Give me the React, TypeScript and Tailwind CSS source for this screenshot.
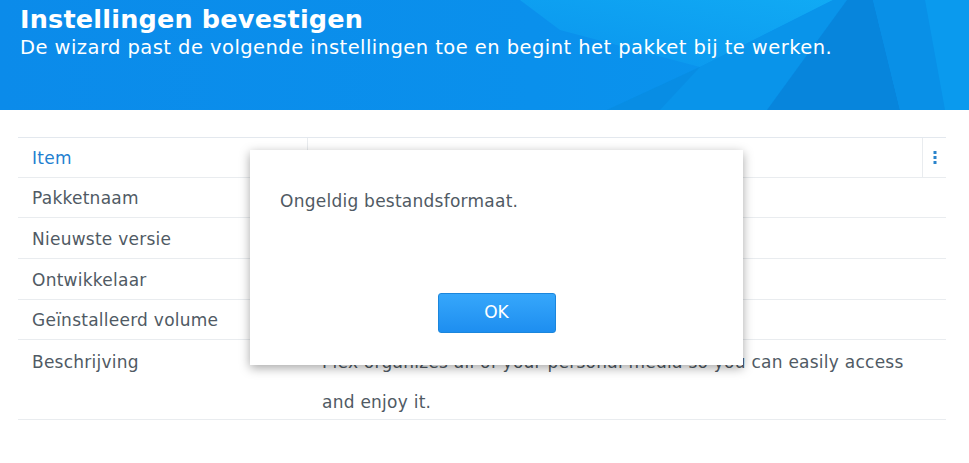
import React from "react";

const rows: { label: string; h: string }[] = [
  { label: "Pakketnaam", h: "h-[40px]" },
  { label: "Nieuwste versie", h: "h-[41px]" },
  { label: "Ontwikkelaar", h: "h-[41px]" },
  { label: "Geïnstalleerd volume", h: "h-[40px]" },
];

export default function App() {
  return (
    <div className="relative w-[969px] h-[463px] bg-white overflow-hidden font-['DejaVu_Sans',sans-serif]">
      {/* Header */}
      <div className="relative h-[110px] bg-[#0a8def] overflow-hidden">
        <svg className="absolute inset-0" width="969" height="110" viewBox="0 0 969 110" preserveAspectRatio="none">
          <defs>
            <linearGradient id="g1" x1="0" y1="0" x2="1" y2="0">
              <stop offset="0" stopColor="#0b8bea" />
              <stop offset="0.55" stopColor="#0a90ec" />
              <stop offset="1" stopColor="#0a97ee" />
            </linearGradient>
            <linearGradient id="g2" x1="0" y1="1" x2="1" y2="0">
              <stop offset="0" stopColor="#0a95ee" />
              <stop offset="1" stopColor="#12aef5" />
            </linearGradient>
          </defs>
          <rect x="0" y="0" width="969" height="110" fill="url(#g1)" />
          <polygon points="520,0 833,0 700,67 560,30" fill="url(#g2)" opacity="0.85" />
          <polygon points="700,67 833,0 847,0 767,110 607,110" fill="#0994ea" />
          <polygon points="847,0 873,0 900,110 767,110" fill="#0785dc" />
          <polygon points="873,0 969,0 969,110 900,110" fill="#0990e7" />
          <polygon points="925,0 969,0 969,110 945,110" fill="#0a9aee" />
          <polygon points="607,110 700,67 660,110" fill="#0889e0" opacity="0.6" />
        </svg>
        <div className="relative pl-[20px] pt-[3px]">
          <div className="text-white font-bold text-[25.5px] leading-[32px] tracking-[0.2px]">Instellingen bevestigen</div>
          <div className="text-white text-[19.5px] leading-[24px] mt-[1px] tracking-[0.45px]">
            De wizard past de volgende instellingen toe en begint het pakket bij te werken.
          </div>
        </div>
      </div>

      {/* Table */}
      <div className="mt-[27px] ml-[18px] w-[928px] border-t border-[#e3e8ee] text-[17px] tracking-[0.25px] text-[#505a64]">
        <div className="flex h-[40px] border-b border-[#e9ecef]">
          <div className="w-[290px] border-r border-[#e9ecef] pl-[14px] pt-[2px] flex items-center text-[#1f7fd0]">Item</div>
          <div className="flex-1 border-r border-[#e9ecef]"></div>
          <div className="w-[23px] flex items-center justify-center">
            <svg width="4" height="13" viewBox="0 0 4 13">
              <rect x="0.5" y="0" width="3" height="3" fill="#2a84cc" />
              <rect x="0.5" y="5" width="3" height="3" fill="#2a84cc" />
              <rect x="0.5" y="10" width="3" height="3" fill="#2a84cc" />
            </svg>
          </div>
        </div>
        {rows.map((r) => (
          <div key={r.label} className={`flex ${r.h} border-b border-[#e9ecef]`}>
            <div className="w-[290px] pl-[14px] pt-[3px] flex items-center">{r.label}</div>
            <div className="flex-1"></div>
          </div>
        ))}
        <div className="flex h-[80px] border-b border-[#e9ecef]">
          <div className="w-[290px] pl-[14px] pt-[2px] leading-[40px]">Beschrijving</div>
          <div className="flex-1 pl-[14px] pt-[2px] leading-[40px] pr-[20px]">
            Plex organizes all of your personal media so you can easily access and enjoy it.
          </div>
        </div>
      </div>

      {/* Dialog */}
      <div className="absolute left-[250px] top-[150px] w-[493px] h-[215px] bg-white shadow-[0_3px_10px_rgba(0,0,0,0.35)] flex flex-col">
        <div className="pl-[30px] pt-[39px] text-[17px] tracking-[0.25px] leading-[24px] text-[#505a64]">Ongeldig bestandsformaat.</div>
        <div className="mt-auto mb-[32px] flex justify-center">
          <button className="w-[118px] h-[40px] rounded-[3px] border border-[#1b86dc] bg-gradient-to-b from-[#36a7fb] to-[#1d8ef0] text-white text-[17px]">
            OK
          </button>
        </div>
      </div>
    </div>
  );
}
